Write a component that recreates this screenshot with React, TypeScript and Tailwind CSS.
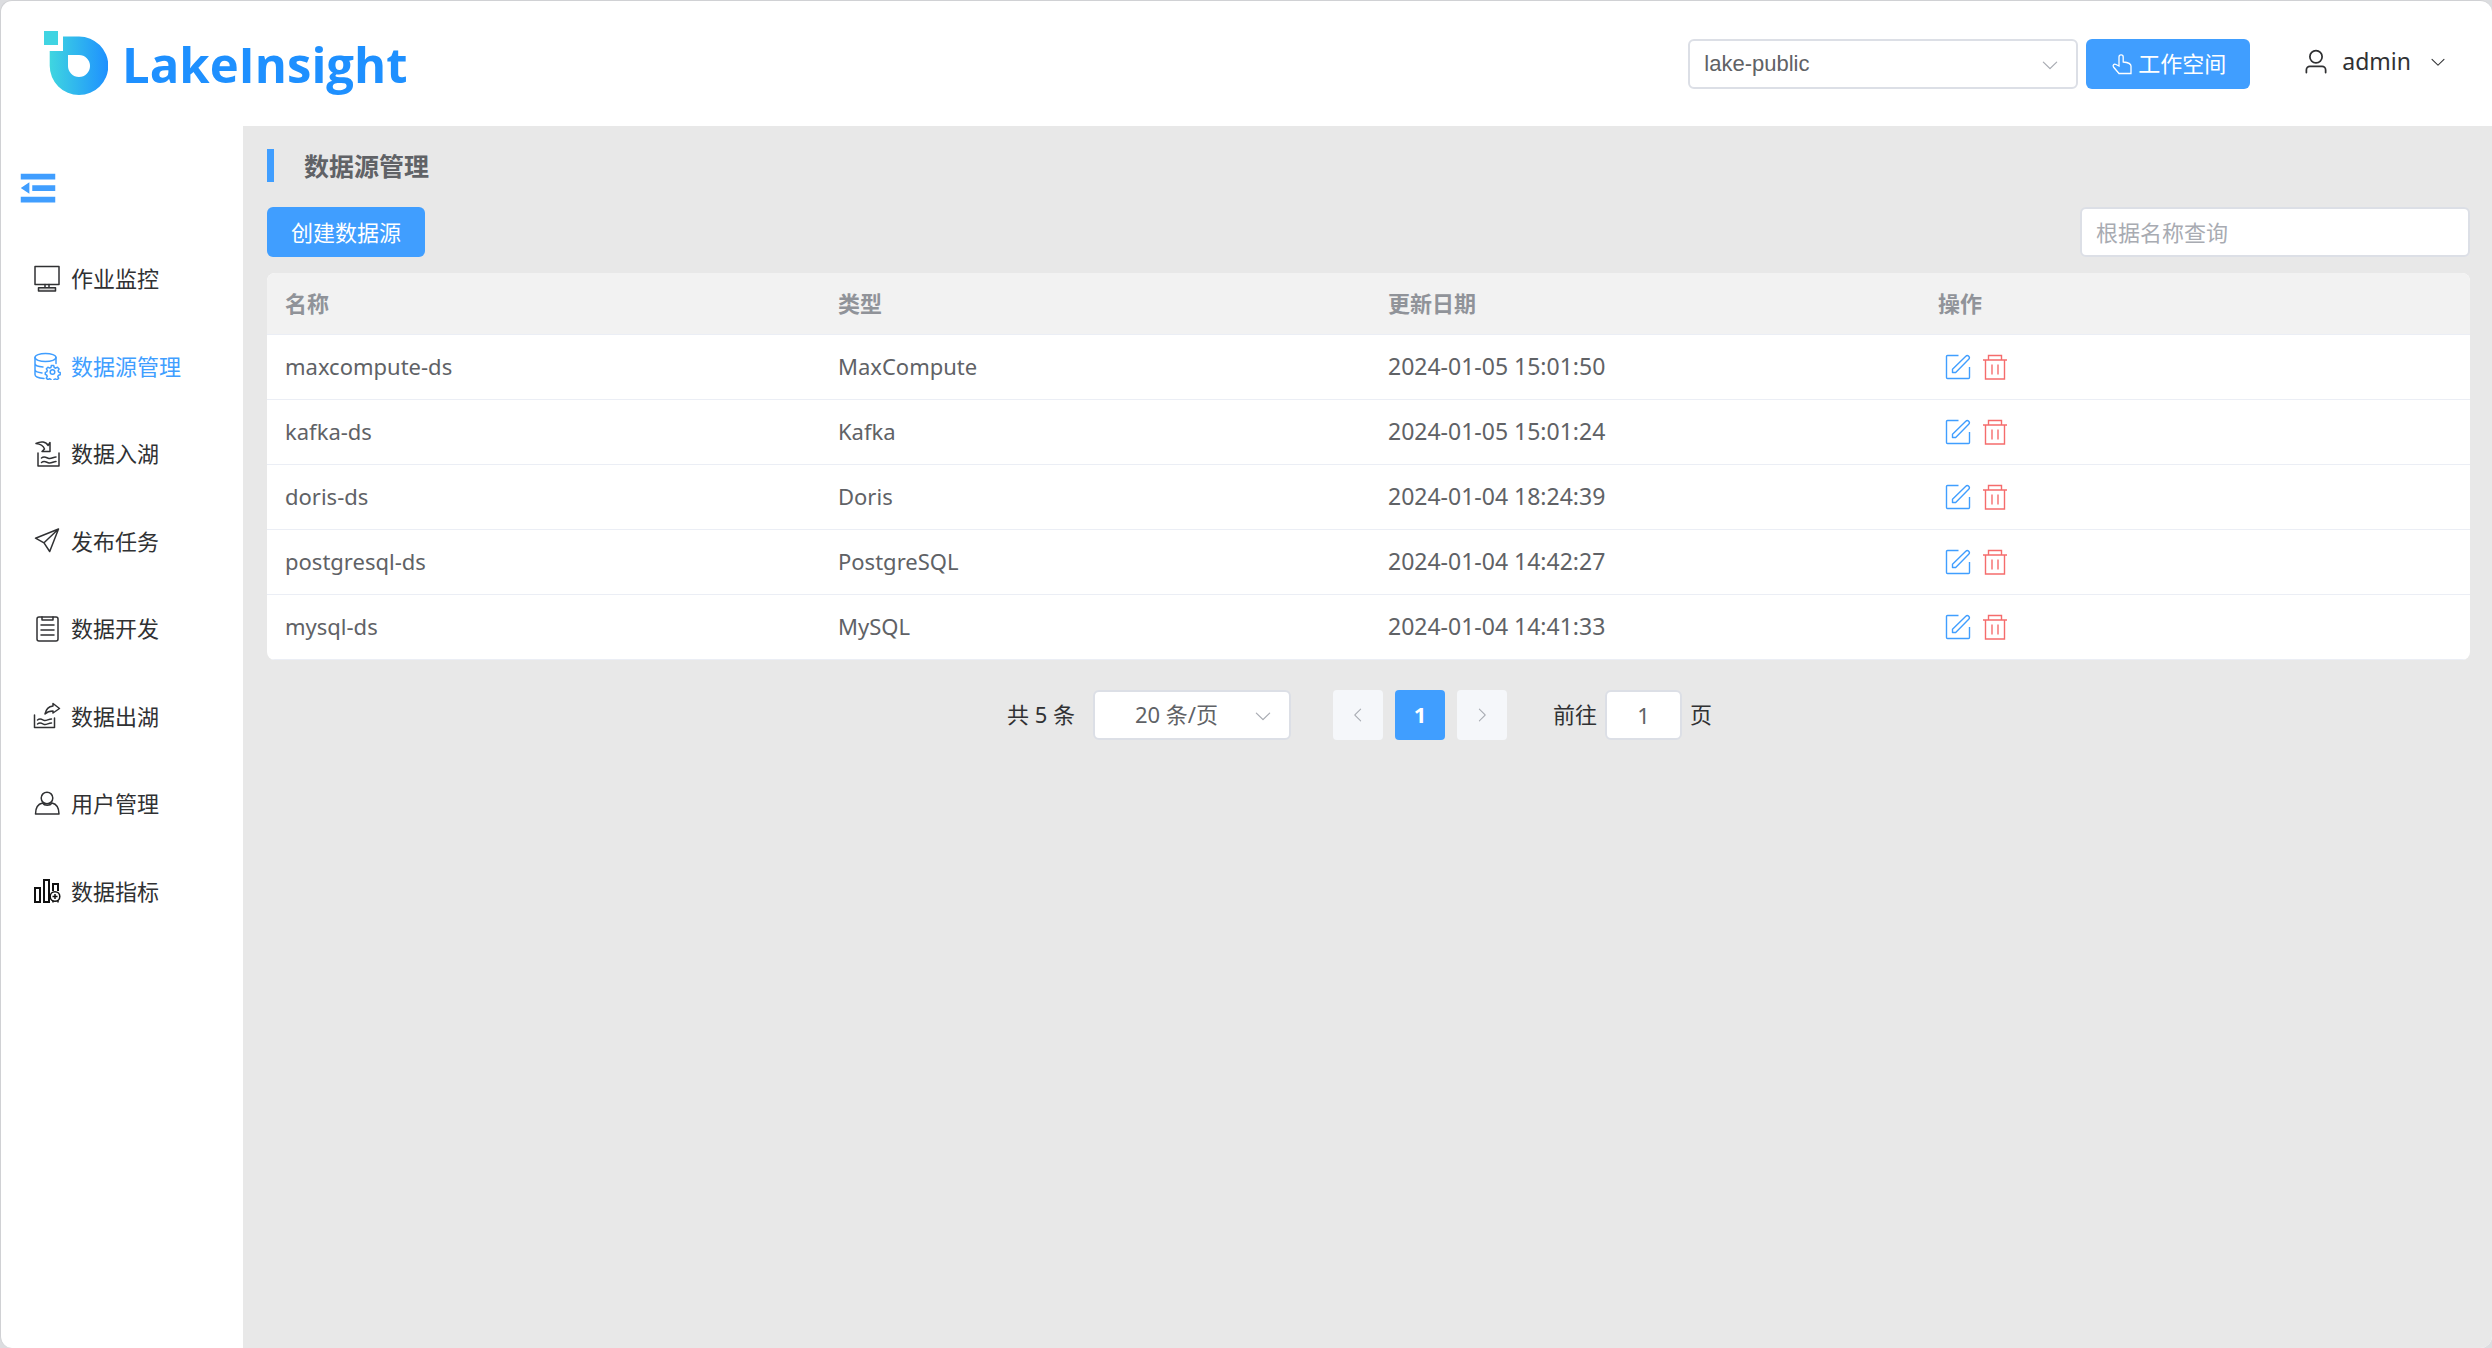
import { useState } from 'react';
import type { ReactNode } from 'react';

interface DataSource {
    name: string;
    type: string;
    updated: string;
}

interface MenuItem {
    name: string;
    path: string;
    icon: ReactNode;
}

const ArrowDown = ({ className }: { className: string }) => (
    <svg viewBox="0 0 1024 1024" fill="currentColor" className={className}>
        <path d="M831.872 340.864 512 652.672 192.128 340.864a30.592 30.592 0 0 0-42.752 0 29.12 29.12 0 0 0 0 41.6L489.664 714.24a32 32 0 0 0 44.672 0l340.288-331.712a29.12 29.12 0 0 0 0-41.728 30.592 30.592 0 0 0-42.752 0z" />
    </svg>
);

const LineIcon = ({ children }: { children: ReactNode }) => (
    <svg
        viewBox="0 0 28 28"
        fill="none"
        stroke="currentColor"
        strokeWidth="1.5"
        strokeLinecap="round"
        strokeLinejoin="round"
        className="size-7 shrink-0"
    >
        {children}
    </svg>
);

const menuItems: MenuItem[] = [
    {
        name: '作业监控',
        path: '#monitor',
        icon: (
            <LineIcon>
                <rect x="2" y="1.5" width="24" height="18" />
                <path d="M12 19.5v3M16 19.5v3" />
                <rect x="5.5" y="22.7" width="17" height="3.3" fill="#d4d4d4" />
            </LineIcon>
        ),
    },
    {
        name: '数据源管理',
        path: '#datasource',
        icon: (
            <LineIcon>
                <ellipse cx="12.5" cy="5.5" rx="10.5" ry="4" />
                <path d="M2 5.5v17c0 2 4 3.6 9 4M23 5.5v6M2 11.5c0 1.8 3.5 3.2 8 3.4M2 17.5c0 1.6 3 3 7 3.4" />
                <circle cx="19.5" cy="20" r="2.3" />
                <path d="M18.3 13.5h2.4l.5 2 1.5.7 1.8-1 1.6 1.7-1 1.7.6 1.5 1.5.4v2.2l-1.7.5-.7 1.4.9 1.7-1.6 1.5-1.6-.9-1.5.6-.4 1.2h-2.2l-.5-1.3-1.4-.6-1.7.8-1.5-1.5.9-1.7-.6-1.5-1.3-.4v-2.1l1.4-.5.6-1.4-.9-1.7 1.5-1.6 1.7.9 1.4-.6z" />
            </LineIcon>
        ),
    },
    {
        name: '数据入湖',
        path: '#ingest',
        icon: (
            <LineIcon>
                <path d="M5 13v13h21V13M8.5 18c3-2.5 5 0 7.5.5s4.5-1.5 7-1.5M8.5 22.5c3-2.5 5 0 7.5.5s4.5-1.5 7-1.5" />
                <path d="M3 3.5c5-2.5 10-2 12 2l2-3v9H9L11.5 9c-1-3-4-5-8.5-5.5z" />
            </LineIcon>
        ),
    },
    {
        name: '发布任务',
        path: '#publish',
        icon: (
            <LineIcon>
                <path d="M25.5 2 2.5 11.2l8.5 4.6zM25.5 2 11 15.8l5.7 8.7z" />
            </LineIcon>
        ),
    },
    {
        name: '数据开发',
        path: '#develop',
        icon: (
            <LineIcon>
                <rect x="4" y="2" width="21" height="24" rx="2" />
                <path d="M9 2v3h11V2M8 10h13M8 15h13M8 20h13" />
            </LineIcon>
        ),
    },
    {
        name: '数据出湖',
        path: '#egress',
        icon: (
            <LineIcon>
                <path d="M1.5 13v12.5h20V16M4.5 18c3-2.5 5 0 7 .5s4-1.5 7-1.5M4.5 22c3-2.5 5 0 7 .5s4-1.5 7-1.5" />
                <path d="M12 12c1-5 4-7.5 8-8V1.5l6.5 5L20 11V9c-3 0-5.5.5-8 3z" />
            </LineIcon>
        ),
    },
    {
        name: '用户管理',
        path: '#users',
        icon: (
            <LineIcon>
                <circle cx="14" cy="8" r="5.8" />
                <path d="M9.5 13c-4.5 1-7 5-7 11H26c0-6-2.5-10-7-11-2 3-7.500 3-9.500 0z" />
            </LineIcon>
        ),
    },
    {
        name: '数据指标',
        path: '#metrics',
        icon: (
            <svg viewBox="0 0 28 28" fill="none" stroke="#111111" strokeWidth="2" className="size-7 shrink-0">
                <path d="M2 11h5v14H2zM11 3h5v22h-5zM20 14V7h5v7" />
                <circle cx="22" cy="19.5" r="4.8" strokeWidth="1.5" />
                <path d="M22 17v5M19.5 19.5h5M20 23.5v2M25 23.5v2" strokeWidth="1.5" />
            </svg>
        ),
    },
];

const dataSources: DataSource[] = [
    { name: 'maxcompute-ds', type: 'MaxCompute', updated: '2024-01-05 15:01:50' },
    { name: 'kafka-ds', type: 'Kafka', updated: '2024-01-05 15:01:24' },
    { name: 'doris-ds', type: 'Doris', updated: '2024-01-04 18:24:39' },
    { name: 'postgresql-ds', type: 'PostgreSQL', updated: '2024-01-04 14:42:27' },
    { name: 'mysql-ds', type: 'MySQL', updated: '2024-01-04 14:41:33' },
];

const Logo = () => (
    <a href="#home" className="flex items-center gap-[14px]">
        <svg viewBox="0 0 64 65" className="h-[65px] w-16">
            <defs>
                <linearGradient id="drop" x1="0" x2="1">
                    <stop offset="0" stopColor="#3fd6e0" />
                    <stop offset="1" stopColor="#1e90ff" />
                </linearGradient>
            </defs>
            <path d="M0 0h14v14H0z" fill="#40d4e2" />
            <path
                d="M19 5.5h16a29.3 29.3 0 1 1-29.3 29.3V20H19zM24 24v11a11 11 0 1 0 11-11z"
                fill="url(#drop)"
                fillRule="evenodd"
            />
        </svg>
        <span className="font-['Open_Sans'] text-[49px] leading-[66px] font-bold text-[#1e90ff]">LakeInsight</span>
    </a>
);

const Header = () => (
    <header className="flex h-[125px] items-center justify-between pr-[45px] pl-[43px]">
        <Logo />
        <div className="flex items-center">
            <div className="relative">
                <select
                    aria-label="工作空间"
                    className="h-[50px] w-[390px] appearance-none rounded-md border-2 border-[#dcdfe6] bg-white px-[14px] font-['Liberation_Sans'] text-[22px] text-[#606266]"
                >
                    <option>lake-public</option>
                </select>
                <ArrowDown className="pointer-events-none absolute top-4 right-[18px] size-5 text-[#a8abb2]" />
            </div>
            <button className="ml-2 flex h-[50px] items-center gap-1 rounded-md bg-[#409eff] px-6 text-[22px] text-white">
                <svg viewBox="0 0 24 24" fill="none" stroke="currentColor" strokeWidth="1.3" className="size-6">
                    <path d="M9 14V5a2 2 0 0 1 4.2 0v5c5 .5 7.8 1.5 7.8 4v7.5H9L3.5 15c-1.2-1.8.5-3.5 2.5-2.5z" />
                </svg>
                工作空间
            </button>
            <button className="ml-[52px] flex items-center pb-1 text-[23px] text-[#303133]">
                <svg viewBox="0 0 1024 1024" fill="currentColor" className="mr-3 size-7">
                    <path d="M512 512a192 192 0 1 0 0-384 192 192 0 0 0 0 384zm0 64a256 256 0 1 1 0-512 256 256 0 0 1 0 512zm320 320v-96a96 96 0 0 0-96-96H288a96 96 0 0 0-96 96v96a32 32 0 1 1-64 0v-96a160 160 0 0 1 160-160h448a160 160 0 0 1 160 160v96a32 32 0 1 1-64 0z" />
                </svg>
                admin
                <ArrowDown className="ml-[18px] size-[18px]" />
            </button>
        </div>
    </header>
);

const Sidebar = () => (
    <aside className="w-[242px] shrink-0">
        <button aria-label="收起菜单" className="mt-[39px] ml-[14px] block text-[#409eff]">
            <svg viewBox="0 0 1024 1024" fill="currentColor" className="size-[46px]">
                <path d="M896 192H128v128h768V192zm0 256H384v128h512V448zm0 256H128v128h768V704zM320 384 128 512l192 128V384z" />
            </svg>
        </button>
        <nav className="mt-6 grid h-[700px] grid-rows-8">
            {menuItems.map((item) => (
                <a
                    key={item.path}
                    href={item.path}
                    className={`flex items-center gap-[10px] pl-8 text-[22px] ${
                        item.path === '#datasource' ? 'text-[#409eff]' : 'text-[#303133]'
                    }`}
                >
                    {item.icon}
                    <span>{item.name}</span>
                </a>
            ))}
        </nav>
    </aside>
);

const RowActions = () => (
    <div className="flex items-center gap-[11px]">
        <button aria-label="编辑" className="text-[#409eff]">
            <svg viewBox="0 0 26 26" fill="none" stroke="currentColor" strokeWidth="1.4" className="size-[26px]">
                <path d="M13.5 1.5h-11a1 1 0 0 0-1 1v21a1 1 0 0 0 1 1h21a1 1 0 0 0 1-1V13" />
                <path d="M7.5 18.5v-3.3L20.8 2.3a1.9 1.9 0 0 1 2.9 2.9l-13 13.3z" strokeLinejoin="round" />
            </svg>
        </button>
        <button aria-label="删除" className="text-[#f56c6c]">
            <svg viewBox="0 0 26 26" fill="none" stroke="currentColor" strokeWidth="1.4" className="size-[26px]">
                <path d="M1 6h24M6.5 6V1.5h13V6M3.5 6v19h19V6M10 10.5v10M16 10.5v10" />
            </svg>
        </button>
    </div>
);

const DataTable = ({ rows }: { rows: DataSource[] }) => (
    <div className="overflow-hidden rounded-lg bg-white">
        <table className="w-full table-fixed text-left text-[22px] text-[#606266]">
            <thead className="bg-[#f2f2f2] text-[#909399]">
                <tr className="h-[61px] border-b border-[#ebeef5]">
                    <th className="w-[553px] pl-[18px]">名称</th>
                    <th className="pl-[18px]">类型</th>
                    <th className="pl-[18px]">更新日期</th>
                    <th className="pl-[18px]">操作</th>
                </tr>
            </thead>
            <tbody>
                {rows.map((row) => (
                    <tr key={row.name} className="h-[65px] border-b border-[#ebeef5]">
                        <td className="pl-[18px]">{row.name}</td>
                        <td className="pl-[18px]">{row.type}</td>
                        <td className="pl-[18px] text-[23px]">{row.updated}</td>
                        <td className="pl-[25px]">
                            <RowActions />
                        </td>
                    </tr>
                ))}
            </tbody>
        </table>
    </div>
);

const Pagination = ({ total }: { total: number }) => {
    const [page, setPage] = useState('1');

    return (
        <div className="mt-[30px] flex items-center justify-center pr-[18px] text-[22px] text-[#303133]">
            <span className="w-[70px] whitespace-nowrap">共 {total} 条</span>
            <div className="relative ml-4">
                <select
                    aria-label="每页条数"
                    className="h-[50px] w-[198px] appearance-none rounded-md border-2 border-[#dcdfe6] bg-white pr-[72px] pl-10 text-right text-[22px] text-[#606266]"
                >
                    <option>20 条/页</option>
                </select>
                <ArrowDown className="pointer-events-none absolute top-4 right-[18px] size-5 text-[#a8abb2]" />
            </div>
            <button
                disabled
                aria-label="上一页"
                className="ml-[42px] flex size-[50px] items-center justify-center rounded-sm bg-[#f5f7fa] text-[#a8abb2]"
            >
                <ArrowDown className="size-[18px] rotate-90" />
            </button>
            <button className="ml-3 size-[50px] rounded-sm bg-[#409eff] font-bold text-white">1</button>
            <button
                disabled
                aria-label="下一页"
                className="ml-3 flex size-[50px] items-center justify-center rounded-sm bg-[#f5f7fa] text-[#a8abb2]"
            >
                <ArrowDown className="size-[18px] -rotate-90" />
            </button>
            <label className="ml-[46px] flex items-center gap-2">
                前往
                <input
                    value={page}
                    onChange={(e) => setPage(e.target.value)}
                    className="h-[50px] w-[77px] rounded-md border-2 border-[#dcdfe6] bg-white text-center text-[22px] text-[#606266]"
                />
                页
            </label>
        </div>
    );
};

const App = () => {
    const [keyword, setKeyword] = useState('');
    const rows = dataSources.filter((row) => row.name.includes(keyword));

    return (
        <div className="min-h-screen bg-[#dcdde0] font-['Noto_Sans','Noto_Sans_CJK_SC',sans-serif]">
            <div className="flex min-h-screen flex-col overflow-hidden rounded-xl border-t border-l border-[#d0d1d4] bg-white">
                <Header />
                <div className="flex flex-1">
                    <Sidebar />
                    <main className="flex-1 bg-[#e8e8e8] pt-[23px] pr-[22px] pl-6">
                        <h1 className="flex items-center text-[25px] leading-8 font-bold text-[#606266]">
                            <span className="mr-[30px] h-[33px] w-[7px] bg-[#409eff]" />
                            数据源管理
                        </h1>
                        <div className="mt-[25px] mb-4 flex items-center justify-between">
                            <button className="h-[50px] rounded-md bg-[#409eff] px-6 text-[22px] text-white">
                                创建数据源
                            </button>
                            <input
                                aria-label="根据名称查询"
                                placeholder="根据名称查询"
                                value={keyword}
                                onChange={(e) => setKeyword(e.target.value)}
                                className="h-[50px] w-[390px] rounded-md border-2 border-[#dcdfe6] bg-white px-[14px] text-[22px] text-[#606266] placeholder:text-[#a8abb2]"
                            />
                        </div>
                        <DataTable rows={rows} />
                        <Pagination total={dataSources.length} />
                    </main>
                </div>
            </div>
        </div>
    );
};

export default App;
